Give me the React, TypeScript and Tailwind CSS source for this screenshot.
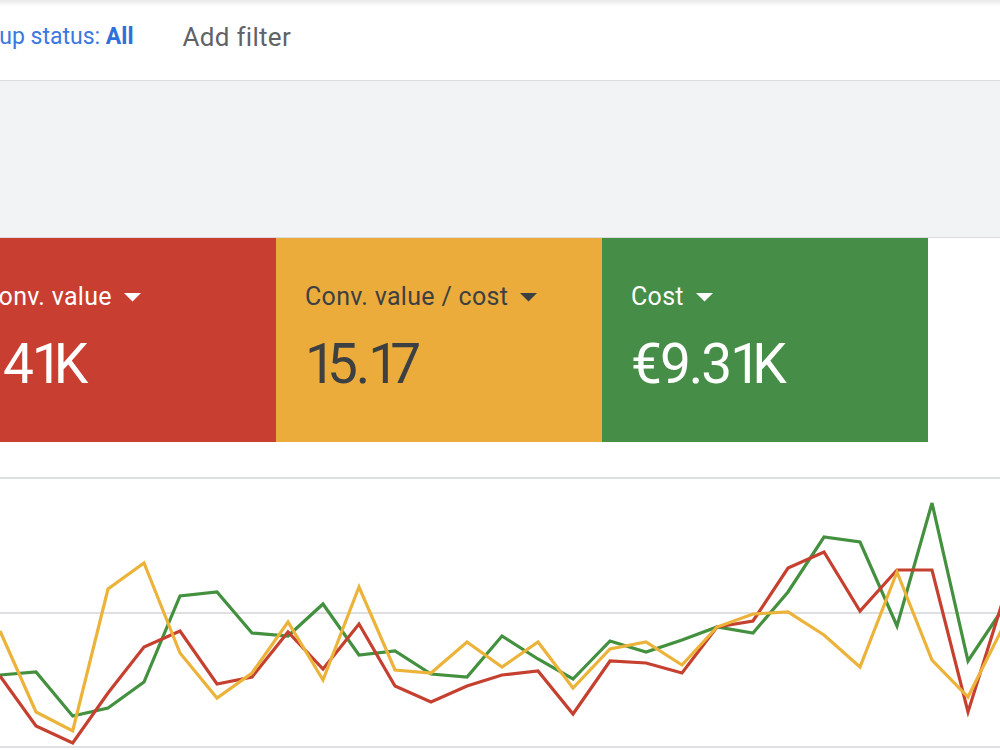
import React from "react";

const xs = [0, 36, 72.7, 108, 144, 180, 217, 252, 288, 323, 359, 395, 431, 467, 502, 538, 573, 610, 646, 682, 717, 753, 788, 824, 860, 897, 932, 968, 1004];
const green = [675, 672, 716, 708, 682, 596, 592, 633, 636, 604, 655, 651, 674, 677, 636, 659, 679, 641, 652, 640, 627, 633, 592, 537, 542, 626, 503, 661, 607];
const red = [676, 726, 743, 693, 647, 631, 684, 677, 632, 669, 624, 686, 702, 686, 675, 671, 714, 661, 663, 673, 627, 621, 568, 552, 611, 570, 570, 712, 597];
const yellow = [631, 712, 731, 589, 563, 653, 698, 673, 622, 680, 587, 670, 673, 642, 667, 642, 688, 649, 642, 665, 627, 614, 612, 635, 667, 572, 660, 697, 625];

const TOP = 442;
const pts = (ys: number[]) => ys.map((y, i) => `${xs[i]},${y - TOP}`).join(" ");

function Caret({ color }: { color: string }) {
  return (
    <svg width="17" height="9" viewBox="0 0 17 9" className="shrink-0">
      <polygon points="0,0 17,0 8.5,8.5" fill={color} />
    </svg>
  );
}

function Value({ text, tightFirst }: { text: string; tightFirst?: boolean }) {
  return (
    <>
      {text.split("").map((ch, i) =>
        ch === "1" ? (
          <span
            key={i}
            className={tightFirst && i === 0 ? "-ml-[4px] tracking-[-6px]" : "tracking-[-9px]"}
          >
            1
          </span>
        ) : (
          <span key={i}>{ch}</span>
        )
      )}
    </>
  );
}

function Card({
  label,
  value,
  bg,
  fg,
  width,
  extra,
  tightFirst,
}: {
  label: string;
  value: string;
  bg: string;
  fg: string;
  width: string;
  extra?: string;
  tightFirst?: boolean;
}) {
  return (
    <div className={`${bg} ${width} ${extra ?? ""} shrink-0 h-[204px] pl-[29px] pt-[45px]`}>
      <div className={`flex items-center gap-[12px] text-[25px] leading-[28px] tracking-[0.3px] whitespace-nowrap ${fg}`}>
        <span>{label}</span>
        <Caret color={fg === "text-white" ? "#ffffff" : "#3c4043"} />
      </div>
      <div className={`mt-[21px] text-[55px] leading-[64px] tracking-[-2px] whitespace-nowrap ${fg}`}>
        <Value text={value} tightFirst={tightFirst} />
      </div>
    </div>
  );
}

export default function App() {
  return (
    <div className="w-[1000px] h-[750px] overflow-hidden bg-white font-['Roboto',sans-serif]">
      {/* filter bar */}
      <div className="h-[80px] bg-[linear-gradient(to_bottom,#e9e9e9,#ffffff_7px)] flex items-start pt-[23px] overflow-hidden">
        <div className="flex items-center leading-[28px] -ml-[68px] whitespace-nowrap">
          <span className="text-[23px] text-[#3b78e0]">
            Ad group status: <span className="font-bold text-[#2f6fdb]">All</span>
          </span>
          <span className="ml-[49px] text-[26px] tracking-[0.3px] text-[#5f6368]">Add filter</span>
        </div>
      </div>
      {/* gray band */}
      <div className="h-[158px] bg-[#f1f3f4] border-t border-b border-[#dadce0]" />
      {/* scorecards */}
      <div className="flex h-[204px] overflow-hidden">
        <Card label="Conv. value" value="141K" bg="bg-[#c83e31]" fg="text-white" width="w-[323px]" extra="-ml-[47px]" tightFirst />
        <Card label="Conv. value / cost" value="15.17" bg="bg-[#ebac3c]" fg="text-[#3c4043]" width="w-[326px]" />
        <Card label="Cost" value="€9.31K" bg="bg-[#468d47]" fg="text-white" width="w-[326px]" />
      </div>
      {/* chart */}
      <svg width="1000" height="308" viewBox="0 0 1000 308" className="block">
        <line x1="0" x2="1000" y1={478 - TOP} y2={478 - TOP} stroke="#dedfe1" strokeWidth="2" />
        <line x1="0" x2="1000" y1={613 - TOP} y2={613 - TOP} stroke="#dedfe1" strokeWidth="2" />
        <line x1="0" x2="1000" y1={747 - TOP} y2={747 - TOP} stroke="#dedfe1" strokeWidth="2" />
        <polyline points={pts(green)} fill="none" stroke="#43903f" strokeWidth="3.2" />
        <polyline points={pts(red)} fill="none" stroke="#c5402f" strokeWidth="3.2" />
        <polyline points={pts(yellow)} fill="none" stroke="#ecb33a" strokeWidth="3.2" />
      </svg>
    </div>
  );
}
